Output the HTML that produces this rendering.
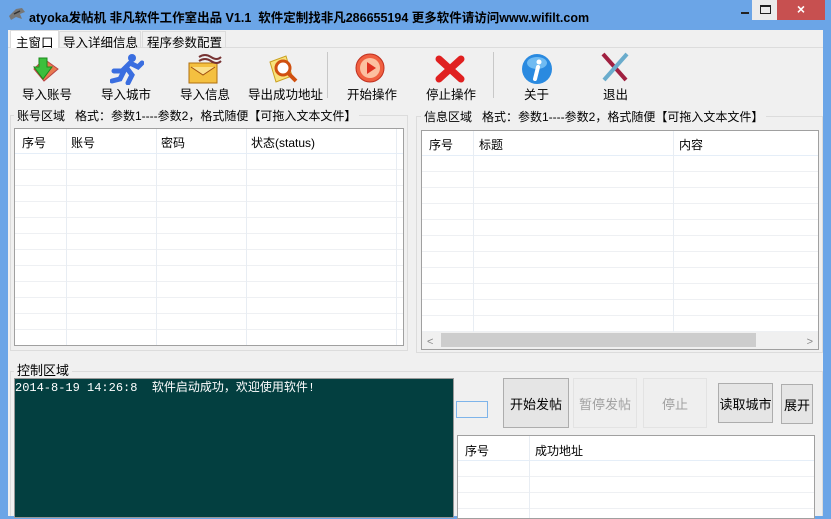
<!DOCTYPE html>
<html><head><meta charset="utf-8"><style>
*{margin:0;padding:0;box-sizing:border-box}
body{width:831px;height:516px;overflow:hidden;background:#6ba5e7;font-family:"Liberation Sans","Noto Sans CJK SC",sans-serif;font-size:12px;color:#000;position:relative}
.a{position:absolute}
.client{left:8px;top:30px;width:815px;height:486px;background:#f0f0f0}
.lv{background:#fff;border:1px solid #a0a0a0;overflow:hidden}
.hd{position:absolute;top:0;left:0;right:0;height:25px;border-bottom:1px solid #e5eef8}
.hd span{position:absolute;top:5px;font-size:12px}
.rows{position:absolute;left:0;right:0;top:25px;bottom:0;background:repeating-linear-gradient(#fff 0 15px,#eef0f3 15px 16px)}
.col{position:absolute;top:0;bottom:0;width:1px;background:#e8edf3}
.tb{position:absolute;top:84px;font-size:12.5px;text-align:center;white-space:nowrap}
.btn{position:absolute;border:1px solid #adadad;background:#e5e5e5;font-size:13px;display:flex;align-items:center;justify-content:center}
.dis{border-color:#e3e3e3;background:#efefef;color:#a0a0a0}
.grp{position:absolute;border:1px solid #dcdcdc}
.gl{position:absolute;background:#f0f0f0;padding:0 3px;font-size:12px;white-space:nowrap}
.tab{position:absolute;white-space:nowrap;font-size:12.5px;border:1px solid #dcdcdc;border-bottom:none}
</style></head><body>
<svg class="a" style="left:8px;top:6px" width="18" height="16" viewBox="0 0 18 16"><path d="M1 10 L8 3 L14 2 L17 6 L12 8 L14 13 L8 11 L3 14Z" fill="#777"/><path d="M6 8 L12 5" stroke="#333" stroke-width="1.5"/></svg>
<div class="a" style="left:29px;top:7px;font-weight:bold;font-size:12.5px;white-space:nowrap">atyoka发帖机 非凡软件工作室出品 V1.1&nbsp; 软件定制找非凡286655194 更多软件请访问www.wifilt.com</div>
<div class="a" style="left:741px;top:12px;width:8px;height:2px;background:#222"></div>
<div class="a" style="left:752px;top:0;width:26px;height:20px;background:#ececec"></div>
<div class="a" style="left:760px;top:5px;width:11px;height:9px;border:1px solid #222;border-top-width:2px"></div>
<div class="a" style="left:777px;top:0;width:48px;height:20px;background:#c75050;color:#fff;font-size:14px;font-weight:bold;text-align:center;line-height:19px">×</div>
<div class="a client"></div>
<div class="a" style="left:8px;top:30px;width:815px;height:18px;background:#f0f0f0;border-bottom:1px solid #dcdcdc"></div>
<div class="tab" style="left:10px;top:30px;width:49px;height:19px;background:#fff;padding:1px 0 0 5px">主窗口</div>
<div class="tab" style="left:59px;top:31px;width:82px;height:17px;padding:0 0 0 3px">导入详细信息</div>
<div class="tab" style="left:142px;top:31px;width:84px;height:17px;padding:0 0 0 4px">程序参数配置</div>
<div class="a" style="left:8px;top:48px;width:815px;height:56px;background:#f0f0f0"></div>
<svg class="a" style="left:30px;top:55px" width="32" height="30" viewBox="0 0 32 30"><path d="M4 14 L14 4 L28 14 L14 26Z" fill="#e87a50" stroke="#b44" /><path d="M9 3h8v9h5l-9 12-9-12h5z" fill="#3cbf3c" stroke="#1a8a1a"/></svg>
<svg class="a" style="left:110px;top:53px" width="34" height="32" viewBox="0 0 34 32"><circle cx="22" cy="5" r="4" fill="#3a6ee0"/><path d="M20 10 L12 18 L4 18 M16 14 L22 22 L18 30 M20 10 L28 14 L32 10 M14 18 L10 26 L2 28" stroke="#3a6ee0" stroke-width="5" fill="none" stroke-linecap="round"/></svg>
<svg class="a" style="left:187px;top:53px" width="36" height="32" viewBox="0 0 36 32"><rect x="2" y="10" width="28" height="20" fill="#f4c040" stroke="#b07010"/><path d="M4 14 L16 22 L28 14" stroke="#a05010" fill="#fbe08a"/><path d="M12 4 q6 -4 12 0 t10 0 M12 8 q6 -4 12 0 t10 0" stroke="#733" stroke-width="2" fill="none"/></svg>
<svg class="a" style="left:268px;top:54px" width="34" height="32" viewBox="0 0 34 32"><path d="M2 8 L18 2 L24 22 L8 28Z" fill="#f9e27a" stroke="#c9a020"/><circle cx="15" cy="14" r="7" fill="#fff" stroke="#d05010" stroke-width="3"/><path d="M20 19 L28 27" stroke="#d05010" stroke-width="4"/></svg>
<div class="a" style="left:327px;top:52px;width:1px;height:46px;background:#c8c8c8"></div>
<svg class="a" style="left:354px;top:52px" width="32" height="32" viewBox="0 0 32 32"><circle cx="16" cy="16" r="14" fill="#f06040" stroke="#c03020"/><circle cx="16" cy="16" r="10" fill="#fcc0a0"/><path d="M13 10 L22 16 L13 22Z" fill="#e03020"/></svg>
<svg class="a" style="left:435px;top:55px" width="30" height="28" viewBox="0 0 30 28"><path d="M4 4 L26 24 M26 4 L4 24" stroke="#e02020" stroke-width="7" stroke-linecap="round"/></svg>
<div class="a" style="left:493px;top:52px;width:1px;height:46px;background:#c8c8c8"></div>
<svg class="a" style="left:521px;top:53px" width="32" height="32" viewBox="0 0 32 32"><circle cx="16" cy="16" r="15" fill="#2a8ae0"/><ellipse cx="16" cy="10" rx="10" ry="6" fill="#8fd0fa" opacity=".7"/><circle cx="18" cy="9" r="2.5" fill="#fff"/><path d="M17 14 L14 26" stroke="#fff" stroke-width="4" stroke-linecap="round"/></svg>
<svg class="a" style="left:600px;top:52px" width="30" height="32" viewBox="0 0 30 32"><path d="M3 2 L26 28" stroke="#a02040" stroke-width="4"/><path d="M27 2 L4 28" stroke="#6aaccc" stroke-width="4"/></svg>
<div class="tb" style="left:22px">导入账号</div>
<div class="tb" style="left:101px">导入城市</div>
<div class="tb" style="left:180px">导入信息</div>
<div class="tb" style="left:248px">导出成功地址</div>
<div class="tb" style="left:347px">开始操作</div>
<div class="tb" style="left:426px">停止操作</div>
<div class="tb" style="left:524px">关于</div>
<div class="tb" style="left:603px">退出</div>
<div class="grp" style="left:10px;top:115px;width:398px;height:236px"></div>
<div class="gl" style="left:14px;top:107px">账号区域&nbsp;&nbsp; 格式：参数1----参数2，格式随便【可拖入文本文件】</div>
<div class="a lv" style="left:14px;top:128px;width:390px;height:218px">
<div class="rows"></div><div class="hd"></div>
<div class="col" style="left:51px"></div><div class="col" style="left:141px"></div><div class="col" style="left:231px"></div><div class="col" style="left:381px"></div>
<div class="hd" style="border:none"><span style="left:7px">序号</span><span style="left:56px">账号</span><span style="left:146px">密码</span><span style="left:236px">状态(status)</span></div>
</div>
<div class="grp" style="left:416px;top:116px;width:407px;height:237px"></div>
<div class="gl" style="left:421px;top:108px">信息区域&nbsp;&nbsp; 格式：参数1----参数2，格式随便【可拖入文本文件】</div>
<div class="a lv" style="left:421px;top:130px;width:398px;height:220px">
<div class="rows"></div><div class="hd"></div>
<div class="col" style="left:51px"></div><div class="col" style="left:251px"></div>
<div class="hd" style="border:none"><span style="left:7px">序号</span><span style="left:57px">标题</span><span style="left:257px">内容</span></div>
<div class="a" style="left:0;right:0;bottom:0;height:17px;background:#f0f0f0"></div>
<div class="a" style="left:19px;width:315px;bottom:2px;height:14px;background:#cdcdcd"></div>
<div class="a" style="left:5px;bottom:1px;color:#888;font-size:11px">&lt;</div>
<div class="a" style="right:5px;bottom:1px;color:#888;font-size:11px">&gt;</div>
</div>
<div class="a" style="left:10px;top:371px;width:813px;height:145px;border:1px solid #dcdcdc;border-bottom:none"></div>
<div class="gl" style="left:14px;top:360px;font-size:13px">控制区域</div>
<div class="a" style="left:14px;top:378px;width:440px;height:140px;background:#033f40;border:1px solid #999"></div>
<div class="a" style="left:15px;top:378px;color:#fff;font-family:'Liberation Mono','Noto Sans CJK SC',monospace;font-size:12px;white-space:pre">2014-8-19 14:26:8  软件启动成功，欢迎使用软件!</div>
<div class="a" style="left:456px;top:401px;width:32px;height:17px;border:1px solid #7eb4ea;background:#f0f0f0"></div>
<div class="btn" style="left:503px;top:378px;width:66px;height:50px">开始发帖</div>
<div class="btn dis" style="left:573px;top:378px;width:64px;height:50px">暂停发帖</div>
<div class="btn dis" style="left:643px;top:378px;width:64px;height:50px">停止</div>
<div class="btn" style="left:718px;top:383px;width:55px;height:40px">读取城市</div>
<div class="btn" style="left:781px;top:384px;width:32px;height:40px">展开</div>
<div class="a lv" style="left:457px;top:435px;width:358px;height:84px">
<div class="rows"></div><div class="hd"></div>
<div class="col" style="left:71px"></div>
<div class="hd" style="border:none"><span style="left:7px;top:6px">序号</span><span style="left:77px;top:6px">成功地址</span></div>
</div>
</body></html>
